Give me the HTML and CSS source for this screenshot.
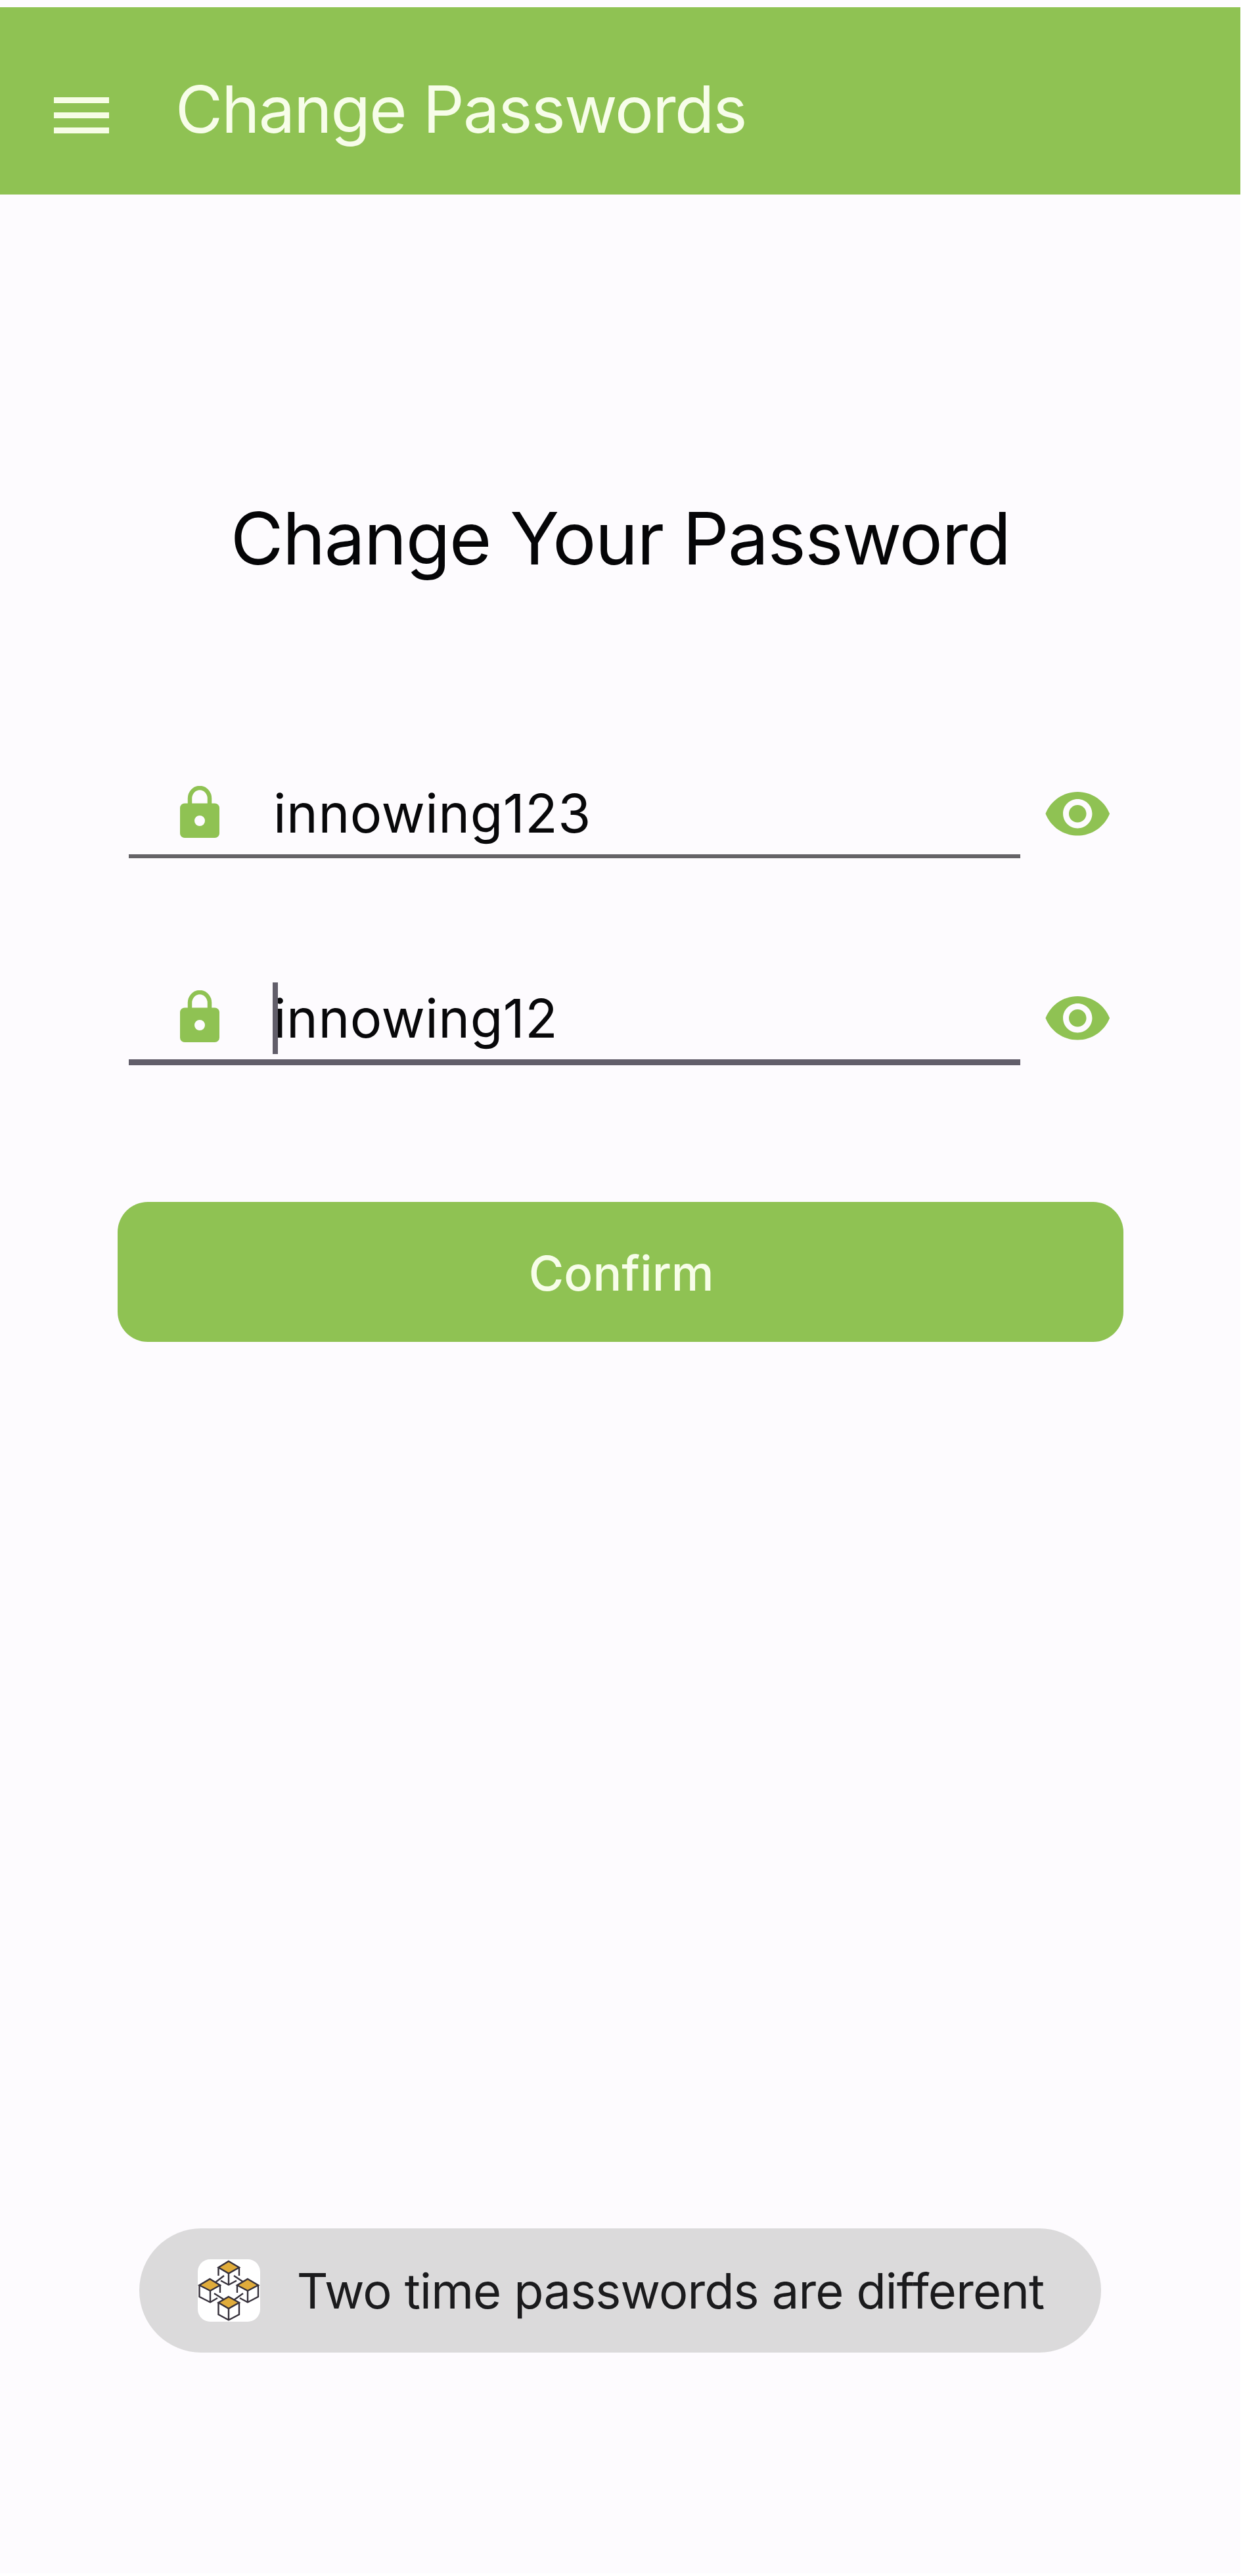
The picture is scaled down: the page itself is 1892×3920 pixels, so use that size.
FILE: index.html
```html
<!DOCTYPE html>
<html lang="en">
<head>
<meta charset="utf-8">
<title>Change Passwords</title>
<link rel="stylesheet" href="styles.css">
</head>
<body>
<div class="screen">
  <header class="app-bar">
    <svg class="menu-icon" viewBox="0 0 84 55" fill="#f7fde6"><path d="M0 0h84v9H0zM0 23h84v9H0zM0 46h84v9H0z"/></svg>
    <div class="app-title">Change Passwords</div>
  </header>
  <main class="content">
    <h1 class="heading">Change Your Password</h1>
    <div class="row">
      <div class="field">
        <svg class="lock" viewBox="0 0 60 79"><path d="M15 29V19a15 16 0 0 1 30 0v10" fill="none" stroke="#8fc253" stroke-width="6.500"/><path fill="#8fc253" fill-rule="evenodd" d="M7 26.500h46a7 7 0 0 1 7 7V72a7 7 0 0 1-7 7H7a7 7 0 0 1-7-7V33.500a7 7 0 0 1 7-7zM30 45a8 8 0 1 0 0 16a8 8 0 1 0 0-16z"/></svg>
        <span class="value">innowing123</span>
      </div>
      <svg class="eye" viewBox="0 0 24 24"><path d="M12 4.500C7 4.500 2.730 7.610 1 12c1.730 4.390 6 7.500 11 7.500s9.270-3.110 11-7.500c-1.730-4.390-6-7.500-11-7.500zM12 17c-2.760 0-5-2.240-5-5s2.240-5 5-5 5 2.240 5 5-2.240 5-5 5zm0-8c-1.660 0-3 1.340-3 3s1.340 3 3 3 3-1.340 3-3-1.340-3-3-3z"/></svg>
    </div>
    <div class="row">
      <div class="field field-focused">
        <svg class="lock" viewBox="0 0 60 79"><path d="M15 29V19a15 16 0 0 1 30 0v10" fill="none" stroke="#8fc253" stroke-width="6.500"/><path fill="#8fc253" fill-rule="evenodd" d="M7 26.500h46a7 7 0 0 1 7 7V72a7 7 0 0 1-7 7H7a7 7 0 0 1-7-7V33.500a7 7 0 0 1 7-7zM30 45a8 8 0 1 0 0 16a8 8 0 1 0 0-16z"/></svg>
        <span class="value">innowing12<i class="caret"></i></span>
      </div>
      <svg class="eye" viewBox="0 0 24 24"><path d="M12 4.500C7 4.500 2.730 7.610 1 12c1.730 4.390 6 7.500 11 7.500s9.270-3.110 11-7.500c-1.730-4.390-6-7.500-11-7.500zM12 17c-2.760 0-5-2.240-5-5s2.240-5 5-5 5 2.240 5 5-2.240 5-5 5zm0-8c-1.660 0-3 1.340-3 3s1.340 3 3 3 3-1.340 3-3-1.340-3-3-3z"/></svg>
    </div>
    <button class="confirm">Confirm</button>
  </main>
  <div class="toast">
    <svg class="app-icon" viewBox="0 0 95 95">
      <rect width="95" height="95" rx="19" fill="#fff"/>
      <g fill="none" stroke="#35303a" stroke-width="2.400">
        <path d="M27 35l13-10M55 25l15 10M25 52l16 10M69 52L55 62"/>
        <path d="M31.500 12.500V25M63 12.500V25M47 21.500V38M35 32.500L47 39l12-6.500"/>
        <path d="M2.500 39.500V57L19 65.500l11-6.500M19 48v17.500M34 39.500V51"/>
        <path d="M92 39.500V57L76 65.500L64 59M76 48v17.500M60 39.500V51"/>
        <path d="M31.500 66v18L47 92.500L63 84V66M47 75v17.500"/>
        <g fill="#e0ac3b">
          <path d="M47 3l16 9.500l-16 9l-15.500-9z"/>
          <path d="M18.500 30L34 39.500L19 48L2.500 39.500z"/>
          <path d="M76 30l16 9.500L76 48l-16-8.500z"/>
          <path d="M47 57l16 9l-16 9l-15.500-9z"/>
        </g>
      </g>
    </svg>
    <span class="toast-text">Two time passwords are different</span>
  </div>
</div>
</body>
</html>
```
FILE: styles.css
```css
* { box-sizing: border-box; }

body {
  margin: 0;
  background: #fff;
  font-family: Inter, sans-serif;
}

svg { display: block; flex: none; }

.screen {
  display: flex;
  flex-direction: column;
  width: 1888px;
  height: 3916px;
  padding-top: 11px;
  background: #fdfbfe;
}

.app-bar {
  display: flex;
  align-items: flex-start;
  height: 284.5px;
  padding-left: 82px;
  background: #8fc253;
}

.menu-icon {
  width: 84px;
  height: 55px;
  margin-top: 136.5px;
}

.app-title {
  margin: 85.5px 0 0 101px;
  color: #f7fde9;
  font-size: 98.5px;
  line-height: 140px;
  letter-spacing: -1.77px;
  white-space: nowrap;
}

.content {
  display: flex;
  flex-direction: column;
  padding: 443.5px 178px 0 178.5px;
}

.heading {
  margin: 0 0 275px;
  color: #050507;
  font-size: 110.5px;
  font-weight: 400;
  line-height: 160px;
  letter-spacing: -1.6px;
  text-align: center;
  white-space: nowrap;
}

.row {
  display: flex;
  align-items: flex-start;
  gap: 34px;
  height: 311px;
  padding-left: 17.5px;
}

.field {
  display: flex;
  align-items: center;
  width: 1357px;
  height: 132px;
  padding-left: 77.5px;
  border-bottom: 6px solid #656367;
}

.field-focused {
  height: 136px;
  border-bottom: 9px solid #625e6a;
}

.lock {
  width: 60px;
  height: 79px;
  margin: -4px 82.5px 0 0;
}

.value {
  position: relative;
  margin-top: 3px;
  color: #08080a;
  font-size: 81px;
  line-height: 109px;
  letter-spacing: 0.5px;
  white-space: nowrap;
}

.caret {
  position: absolute;
  top: -1px;
  left: -1.5px;
  width: 8.5px;
  height: 109px;
  background: #625e6a;
}

.eye {
  width: 106.5px;
  height: 106.5px;
  margin-top: 11px;
  fill: #8fc253;
}

.confirm {
  height: 213px;
  margin-top: 33px;
  padding: 3px 0 0 3px;
  border: 0;
  border-radius: 46px;
  background: #8fc253;
  color: #f7fde9;
  font: 500 73px Inter, sans-serif;
}

.toast {
  display: flex;
  align-items: center;
  gap: 56px;
  width: 1463.5px;
  height: 189.5px;
  margin: auto 0 336px 212px;
  padding-left: 88.7px;
  border-radius: 95px;
  background: #dbdadb;
}

.app-icon { width: 95px; height: 95px; }

.toast-text {
  padding-top: 2px;
  color: #1b1b1d;
  font-size: 74px;
  line-height: 100px;
  letter-spacing: -0.87px;
  white-space: nowrap;
}
```
